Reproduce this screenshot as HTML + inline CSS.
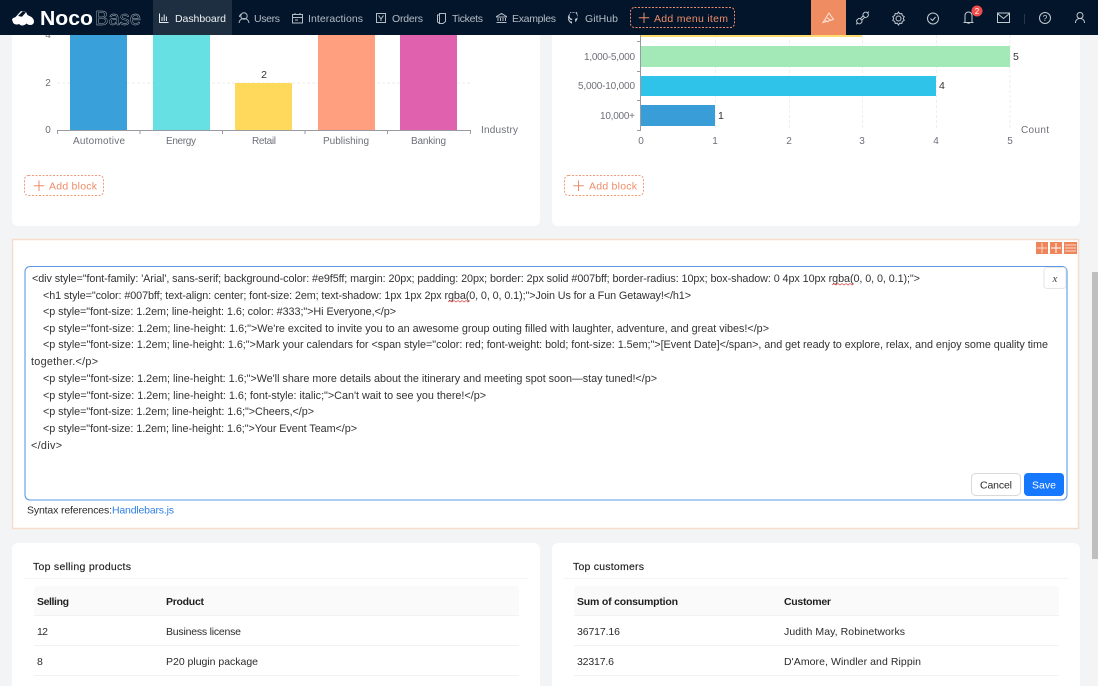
<!DOCTYPE html>
<html><head><meta charset="utf-8"><title>NocoBase</title>
<style>
html,body{margin:0;padding:0;width:1098px;height:686px;overflow:hidden;background:#f3f4f6}
svg{display:block;font-family:"Liberation Sans",sans-serif}
.n{font-size:10.5px;fill:#b4bcc4}
.i{fill:none;stroke:#b4bcc4;stroke-width:1}
.r{fill:none;stroke:#c3cad0;stroke-width:1}
.ax{font-size:10px;fill:#6e7079}
.v{font-size:10.5px;fill:#333}
.c{font-size:10.8px;fill:#333}
.t{font-size:10.5px;fill:#2b2b2b}
.h{font-size:10.5px;fill:#1f1f1f;font-weight:bold}
.o{font-size:10.5px;fill:#ee8d68}
</style></head><body>
<svg width="1098" height="686" viewBox="0 0 1098 686" xmlns="http://www.w3.org/2000/svg">
<rect width="1098" height="686" fill="#f3f4f6"/>
<!-- scrollbar -->
<rect x="1091" y="35" width="7" height="651" fill="#f4f4f4"/>
<rect x="1092" y="272" width="6" height="287" fill="#bfbfbf"/>

<!-- top cards -->
<rect x="12" y="20" width="528" height="206" rx="6" fill="#fff"/>
<rect x="552" y="20" width="528" height="206" rx="6" fill="#fff"/>

<!-- left chart -->
<line x1="57" y1="83" x2="470" y2="83" stroke="#eeeeee" stroke-dasharray="3 2"/>
<rect x="70" y="30" width="57" height="100" fill="#3aa0da"/>
<rect x="153" y="30" width="57" height="100" fill="#66e0e3"/>
<rect x="235" y="83" width="57" height="47" fill="#ffd95c"/>
<rect x="318" y="30" width="57" height="100" fill="#ff9f7f"/>
<rect x="400" y="30" width="57" height="100" fill="#e062ae"/>
<path d="M57.500 134V130.500H470.500V134M140 130.500V134M222.500 130.500V134M305 130.500V134M387.500 130.500V134" fill="none" stroke="#6e7079" stroke-opacity=".7"/>
<text class="ax" x="48" y="38" text-anchor="middle">4</text>
<text class="ax" x="48" y="86" text-anchor="middle">2</text>
<text class="ax" x="48" y="133" text-anchor="middle">0</text>
<text class="v" x="264" y="78" text-anchor="middle">2</text>
<text class="ax" x="73" y="144" textLength="52" lengthAdjust="spacing">Automotive</text>
<text class="ax" x="166" y="144" textLength="30" lengthAdjust="spacing">Energy</text>
<text class="ax" x="252" y="144" textLength="24" lengthAdjust="spacing">Retail</text>
<text class="ax" x="323" y="144" textLength="46" lengthAdjust="spacing">Publishing</text>
<text class="ax" x="411" y="144" textLength="35" lengthAdjust="spacing">Banking</text>
<text class="ax" x="481" y="133" textLength="37" lengthAdjust="spacing">Industry</text>
<rect x="24.500" y="175.500" width="79" height="20" rx="4" fill="#fff" stroke="#ee9c7c" stroke-dasharray="2 1.500"/>
<path d="M39 180.500V191M33.700 185.700H44.300" stroke="#ee8d68" fill="none"/>
<text class="o" x="49" y="189.500" textLength="48" lengthAdjust="spacing">Add block</text>

<!-- right chart -->
<g stroke="#eeeeee" stroke-dasharray="3 2"><line x1="715.500" y1="35" x2="715.500" y2="130"/><line x1="789.500" y1="35" x2="789.500" y2="130"/><line x1="862.500" y1="35" x2="862.500" y2="130"/><line x1="936.500" y1="35" x2="936.500" y2="130"/><line x1="1010" y1="35" x2="1010" y2="130"/></g>
<rect x="641" y="30" width="221" height="7" fill="#ffdb70"/>
<rect x="641" y="46" width="369" height="21" fill="#a3e8b7"/>
<rect x="641" y="76" width="295" height="20" fill="#2fc3ea"/>
<rect x="641" y="105" width="74" height="21" fill="#399dd8"/>
<path d="M637 41.500H641M637 71.500H641M637 100.500H641M637 130.500H641M640.500 35V131" fill="none" stroke="#6e7079" stroke-opacity=".7"/>
<text class="ax" x="584" y="60" textLength="51" lengthAdjust="spacing">1,000-5,000</text>
<text class="ax" x="578" y="89" textLength="57" lengthAdjust="spacing">5,000-10,000</text>
<text class="ax" x="600" y="119" textLength="35" lengthAdjust="spacing">10,000+</text>
<text class="v" x="1013" y="60">5</text>
<text class="v" x="939" y="89">4</text>
<text class="v" x="718" y="119">1</text>
<text class="ax" x="641" y="144" text-anchor="middle">0</text>
<text class="ax" x="715" y="144" text-anchor="middle">1</text>
<text class="ax" x="789" y="144" text-anchor="middle">2</text>
<text class="ax" x="862" y="144" text-anchor="middle">3</text>
<text class="ax" x="936" y="144" text-anchor="middle">4</text>
<text class="ax" x="1010" y="144" text-anchor="middle">5</text>
<text class="ax" x="1021" y="133" textLength="28" lengthAdjust="spacing">Count</text>
<rect x="564.500" y="175.500" width="79" height="20" rx="4" fill="#fff" stroke="#ee9c7c" stroke-dasharray="2 1.500"/>
<path d="M578.500 180.500V191M573.200 185.700H583.800" stroke="#ee8d68" fill="none"/>
<text class="o" x="589" y="189.500" textLength="48" lengthAdjust="spacing">Add block</text>

<!-- editor block -->
<rect x="12.500" y="239.500" width="1066" height="289" fill="#fff" stroke="#f8dccb" stroke-width="1.500"/>
<rect x="1036" y="242" width="12" height="12" fill="#ee855a"/>
<path d="M1042 243V253M1037 248H1047" stroke="#fbd9c9"/>
<rect x="1050" y="242" width="12" height="12" fill="#ee855a"/>
<path d="M1056 243V253M1051 248H1061" stroke="#fff"/>
<rect x="1064" y="242" width="13" height="12" fill="#ee855a"/>
<path d="M1065 245H1076M1065 248H1076M1065 251H1076" stroke="#fbd9c9"/>
<rect x="25" y="266.500" width="1042" height="233.500" rx="5" fill="#fff" stroke="#5a9ae6" stroke-width="1.100"/>
<rect x="1044" y="267.500" width="22" height="21" rx="3" fill="#fff" stroke="#e6e6e6"/>
<text x="1055" y="282" text-anchor="middle" font-family="Liberation Serif" font-style="italic" font-size="11" fill="#444">x</text>

<text class="c" x="32" y="282" textLength="888" lengthAdjust="spacing">&lt;div style="font-family: 'Arial', sans-serif; background-color: #e9f5ff; margin: 20px; padding: 20px; border: 2px solid #007bff; border-radius: 10px; box-shadow: 0 4px 10px rgba(0, 0, 0, 0.1);"&gt;</text>
<text class="c" x="43" y="299" textLength="648" lengthAdjust="spacing">&lt;h1 style="color: #007bff; text-align: center; font-size: 2em; text-shadow: 1px 1px 2px rgba(0, 0, 0, 0.1);"&gt;Join Us for a Fun Getaway!&lt;/h1&gt;</text>
<text class="c" x="43" y="315" textLength="353" lengthAdjust="spacing">&lt;p style="font-size: 1.2em; line-height: 1.6; color: #333;"&gt;Hi Everyone,&lt;/p&gt;</text>
<text class="c" x="43" y="332" textLength="726" lengthAdjust="spacing">&lt;p style="font-size: 1.2em; line-height: 1.6;"&gt;We're excited to invite you to an awesome group outing filled with laughter, adventure, and great vibes!&lt;/p&gt;</text>
<text class="c" x="43" y="348" textLength="1005" lengthAdjust="spacing">&lt;p style="font-size: 1.2em; line-height: 1.6;"&gt;Mark your calendars for &lt;span style="color: red; font-weight: bold; font-size: 1.5em;"&gt;[Event Date]&lt;/span&gt;, and get ready to explore, relax, and enjoy some quality time</text>
<text class="c" x="31" y="365" textLength="67" lengthAdjust="spacing">together.&lt;/p&gt;</text>
<text class="c" x="43" y="382" textLength="614" lengthAdjust="spacing">&lt;p style="font-size: 1.2em; line-height: 1.6;"&gt;We'll share more details about the itinerary and meeting spot soon—stay tuned!&lt;/p&gt;</text>
<text class="c" x="43" y="399" textLength="443" lengthAdjust="spacing">&lt;p style="font-size: 1.2em; line-height: 1.6; font-style: italic;"&gt;Can't wait to see you there!&lt;/p&gt;</text>
<text class="c" x="43" y="415" textLength="271" lengthAdjust="spacing">&lt;p style="font-size: 1.2em; line-height: 1.6;"&gt;Cheers,&lt;/p&gt;</text>
<text class="c" x="43" y="432" textLength="314" lengthAdjust="spacing">&lt;p style="font-size: 1.2em; line-height: 1.6;"&gt;Your Event Team&lt;/p&gt;</text>
<text class="c" x="31" y="449" textLength="31" lengthAdjust="spacing">&lt;/div&gt;</text>
<path d="M832 285l2 -1.500 2 1.500 2 -1.500 2 1.500 2 -1.500 2 1.500 2 -1.500 2 1.500 2 -1.500 2 1.500 2 -1.500" fill="none" stroke="#e04040" stroke-width=".7"/>
<path d="M448 302l2 -1.500 2 1.500 2 -1.500 2 1.500 2 -1.500 2 1.500 2 -1.500 2 1.500 2 -1.500 2 1.500 2 -1.500" fill="none" stroke="#e04040" stroke-width=".7"/>

<rect x="971.500" y="473.500" width="49" height="22" rx="4" fill="#fff" stroke="#d9d9d9"/>
<text class="t" x="996" y="488.500" text-anchor="middle" textLength="32" lengthAdjust="spacing">Cancel</text>
<rect x="1024" y="473" width="40" height="23" rx="4" fill="#1677ff"/>
<text class="t" x="1044" y="488.500" text-anchor="middle" style="fill:#fff">Save</text>
<text class="t" x="27" y="513.500" textLength="85" lengthAdjust="spacing">Syntax references:</text>
<text class="t" x="112" y="513.500" textLength="62" lengthAdjust="spacing" style="fill:#2f7fe6">Handlebars.js</text>

<!-- bottom cards -->
<rect x="12" y="543" width="528" height="160" rx="6" fill="#fff"/>
<rect x="552" y="543" width="528" height="160" rx="6" fill="#fff"/>

<text class="t" x="33" y="570" textLength="98" lengthAdjust="spacing" style="fill:#1f1f1f;stroke:#1f1f1f;stroke-width:.15">Top selling products</text>
<line x1="24" y1="578.500" x2="528" y2="578.500" stroke="#f4f4f4"/>
<rect x="34" y="586" width="485" height="29" rx="3" fill="#fafafa"/>
<line x1="34" y1="615.500" x2="519" y2="615.500" stroke="#f2f2f2"/>
<text class="h" x="37" y="605" textLength="32" lengthAdjust="spacing">Selling</text>
<text class="h" x="166" y="605" textLength="38" lengthAdjust="spacing">Product</text>
<text class="t" x="37" y="635" textLength="11" lengthAdjust="spacing">12</text>
<text class="t" x="166" y="635" textLength="75" lengthAdjust="spacing">Business license</text>
<line x1="34" y1="645.500" x2="519" y2="645.500" stroke="#f2f2f2"/>
<text class="t" x="37" y="665">8</text>
<text class="t" x="166" y="665" textLength="92" lengthAdjust="spacing">P20 plugin package</text>
<line x1="34" y1="675.500" x2="519" y2="675.500" stroke="#f2f2f2"/>

<text class="t" x="573" y="570" textLength="71" lengthAdjust="spacing" style="fill:#1f1f1f;stroke:#1f1f1f;stroke-width:.15">Top customers</text>
<line x1="564" y1="578.500" x2="1068" y2="578.500" stroke="#f4f4f4"/>
<rect x="574" y="586" width="485" height="29" rx="3" fill="#fafafa"/>
<line x1="574" y1="615.500" x2="1059" y2="615.500" stroke="#f2f2f2"/>
<text class="h" x="577" y="605" textLength="101" lengthAdjust="spacing">Sum of consumption</text>
<text class="h" x="784" y="605" textLength="47" lengthAdjust="spacing">Customer</text>
<text class="t" x="577" y="635" textLength="43" lengthAdjust="spacing">36717.16</text>
<text class="t" x="784" y="635" textLength="121" lengthAdjust="spacing">Judith May, Robinetworks</text>
<line x1="574" y1="645.500" x2="1059" y2="645.500" stroke="#f2f2f2"/>
<text class="t" x="577" y="665" textLength="37" lengthAdjust="spacing">32317.6</text>
<text class="t" x="784" y="665" textLength="137" lengthAdjust="spacing">D'Amore, Windler and Rippin</text>
<line x1="574" y1="675.500" x2="1059" y2="675.500" stroke="#f2f2f2"/>

<!-- header -->
<rect width="1098" height="35" fill="#03152b"/>
<rect x="153" width="79" height="35" fill="#1d2f40"/>
<path d="M12 20.500c0-2 1.500-3 3-3l1-1 5-5.500 5 1 1.500 3 3 1.500c2 1 3.500 3 3.500 5 0 2-1.500 3.500-3.500 3.500-2 0-3-.5-4-1.500-1 1-2.500 2-4.500 2-1.500 0-2-1-3-1.500-1 .5-1.500 .5-2.500 .5-2 0-4-1.500-4-4z" fill="#fff"/>
<path d="M18 16l4.500-4.500 3.500 .7-4 4.500z" fill="#03152b"/>
<text x="40" y="25" font-size="20.500" font-weight="bold" fill="#fff" textLength="53" lengthAdjust="spacingAndGlyphs">Noco</text>
<text x="95" y="25" font-size="20.500" fill="none" stroke="#b8c0c8" stroke-width=".4" textLength="46" lengthAdjust="spacingAndGlyphs">Base</text>

<!-- nav -->
<path d="M159.500 13.500V22.500H168.500M162 21V17M164.200 21V14.500M166.400 21V16.500" fill="none" stroke="#e8ecef"/>
<text class="n" x="175" y="22" textLength="51" lengthAdjust="spacing" style="fill:#eef1f3">Dashboard</text>

<circle cx="244" cy="16" r="3.200" class="i"/><path d="M239 23c.5-3 2.500-4.500 5-4.500s4.500 1.500 5 4.500M241 14c-1 1-1.500 2-1.500 3" class="i"/>
<text class="n" x="254" y="22" textLength="26" lengthAdjust="spacing">Users</text>

<rect x="292.500" y="14.500" width="10" height="8.500" class="i"/><path d="M292.500 17.500H302.500M295 13V15M300 13V15M295 20H298" class="i"/>
<text class="n" x="308" y="22" textLength="55" lengthAdjust="spacing">Interactions</text>

<rect x="376.500" y="13.500" width="9" height="9" class="i"/><path d="M378.500 15.500L381 19 383.500 15.500M381 19V21" class="i"/>
<text class="n" x="392" y="22" textLength="31" lengthAdjust="spacing">Orders</text>

<path d="M439.500 13.500H445.500V21.500L443 23.500H439.500ZM439.500 15H437.500V22L439.500 23.500" class="i"/>
<text class="n" x="452" y="22" textLength="31" lengthAdjust="spacing">Tickets</text>

<path d="M496.500 16.500L501.500 13.500 506.500 16.500V17H496.500ZM498 18V21M500.500 18V21M503 18V21M505.500 18V21M496.500 22.500H506.500" class="i"/>
<text class="n" x="512" y="22" textLength="44" lengthAdjust="spacing">Examples</text>

<path d="M574 12a6 6 0 0 0-2 11.700v-2.200c-1.700.3-2.200-.8-2.400-1.300-.1-.3-.5-1-.9-1.200-.3-.2-.7-.5 0-.5.600 0 1 .6 1.200.8.700 1.100 1.700.8 2.100.6.100-.5.300-.8.500-1-1.500-.2-3-.8-3-3.300 0-.7.200-1.300.6-1.800-.1-.2-.3-.8.100-1.700 0 0 .5-.2 1.800.7a6 6 0 0 1 3.200 0c1.300-.9 1.800-.7 1.800-.7.400.9.200 1.500.1 1.700.4.500.6 1.100.6 1.800 0 2.500-1.500 3.100-3 3.300.3.300.5.700.5 1.300v2A6 6 0 0 0 574 12z" fill="#c9cfd4"/>
<text class="n" x="585" y="22" textLength="33" lengthAdjust="spacing">GitHub</text>

<rect x="630.500" y="7.500" width="104" height="20" rx="4" fill="none" stroke="#ee8d68" stroke-dasharray="2 1.500"/>
<path d="M644 12.700V23M638.800 17.800H649.200" stroke="#ee8d68" fill="none"/>
<text class="o" x="654" y="22" textLength="74" lengthAdjust="spacing">Add menu item</text>

<!-- right icons -->
<rect x="811" width="35" height="35" fill="#f08c62"/>
<path d="M823 22.500L829 13 833.500 19.500ZM827 17.800L831.500 20.500M825 20.500L828.500 22" fill="none" stroke="#fbe3d6"/>
<g transform="rotate(-45 862.500 18)" class="r"><rect x="855.500" y="15.500" width="5" height="5" rx="2"/><rect x="864.500" y="15.500" width="5" height="5" rx="2"/><path d="M860.500 17H864.500M860.500 19H864.500M853.500 18H855.500M869.500 18H871.500" /></g>
<path d="M898.500 12l1.200 1.800 2.100-.3.500 2.100 1.900 1-.9 1.900.9 1.900-1.900 1-.5 2.100-2.100-.3-1.200 1.800-1.200-1.800-2.100.3-.5-2.100-1.900-1 .9-1.900-.9-1.900 1.900-1 .5-2.100 2.100.3z" class="r"/><circle cx="898.500" cy="18.500" r="2.500" class="r"/>
<circle cx="933" cy="18.500" r="5.500" class="r"/><path d="M930.500 18.500l2 2 3-3.500" class="r"/>
<path d="M965 22V15.500c0-2 1.500-3.500 3.500-3.500s3.500 1.500 3.500 3.500V22M963.500 22.500H973.500M967.500 22.500c0 1 2 1 2 0" class="r"/>
<circle cx="977" cy="11" r="5.500" fill="#ef4b4b"/>
<text x="977" y="14" text-anchor="middle" font-size="8" fill="#fff">2</text>
<rect x="997.500" y="13" width="12" height="9.500" class="r"/><path d="M997.500 13.500L1003.500 18.500 1009.500 13.500" class="r"/>
<line x1="1024.500" y1="14" x2="1024.500" y2="24" stroke="#25374a"/>
<circle cx="1045" cy="18" r="5.500" class="r"/><text x="1045" y="21" text-anchor="middle" font-size="8.500" fill="#c3cad0">?</text>
<circle cx="1080" cy="15.500" r="3" class="r"/><path d="M1075.500 23c0-3 2-4.500 4.500-4.500s4.500 1.500 4.500 4.500" class="r"/>
</svg>
</body></html>
